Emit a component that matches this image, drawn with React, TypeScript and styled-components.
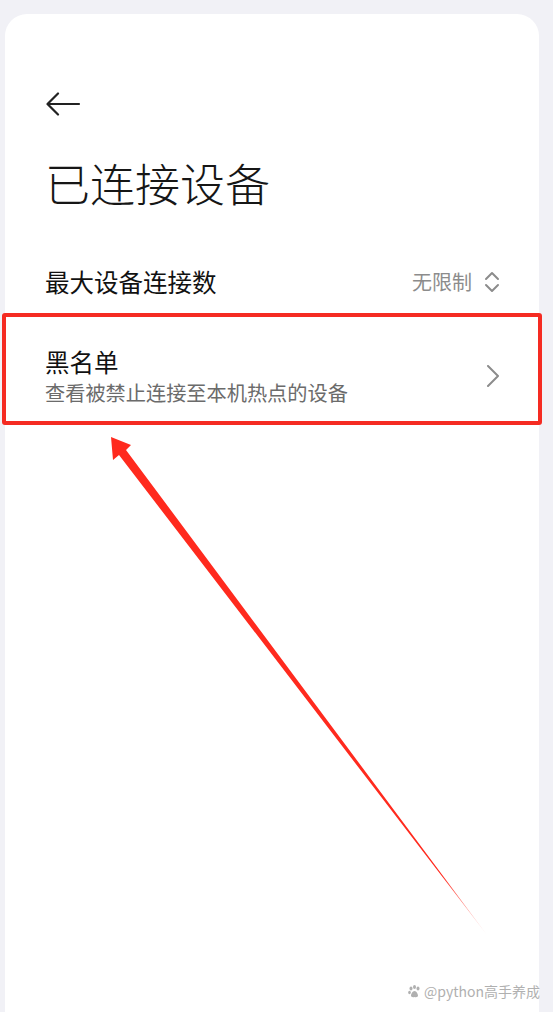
import React from 'react';
import styled, { createGlobalStyle } from 'styled-components';

const GlobalStyle = createGlobalStyle`
  html, body {
    margin: 0;
    padding: 0;
    background: #f1f1f6;
  }
  body {
    font-family: 'Noto Sans CJK SC', 'Noto Sans', sans-serif;
    -webkit-font-smoothing: antialiased;
  }
`;

const Page = styled.div`
  position: relative;
  width: 553px;
  height: 1012px;
  padding-top: 14px;
  box-sizing: border-box;
  overflow: hidden;
`;

const Card = styled.div`
  margin-left: 5px;
  width: 534px;
  height: 998px;
  background: #ffffff;
  border-radius: 22px 22px 0 0;
  padding-top: 78px;
  box-sizing: border-box;
`;

const Header = styled.div`
  display: flex;
  flex-direction: column;
  align-items: flex-start;
  padding-left: 40px;
`;

const BackButton = styled.button`
  display: flex;
  padding: 0;
  border: 0;
  background: none;
  width: 36px;
  height: 24px;
`;

const Title = styled.h1`
  margin: 44px 0 0;
  font-size: 45px;
  line-height: 1;
  font-weight: 300;
  color: #161616;
`;

const List = styled.div`
  display: flex;
  flex-direction: column;
  margin-top: 39px;
`;

const Row = styled.div<{ $highlight?: boolean }>`
  position: relative;
  display: flex;
  align-items: center;
  justify-content: space-between;
  padding: ${(p) => (p.$highlight ? '30px 39px 22px 40px' : '0 39px 0 40px')};
  min-height: ${(p) => (p.$highlight ? '0' : '76px')};

  &::after {
    content: '';
    display: ${(p) => (p.$highlight ? 'block' : 'none')};
    position: absolute;
    top: -7px;
    bottom: 0;
    left: -3px;
    right: -3px;
    border: 4px solid #f52b22;
    border-radius: 3px;
    pointer-events: none;
  }
`;

const RowText = styled.div`
  display: flex;
  flex-direction: column;
`;

const RowTitle = styled.span`
  font-size: 24.5px;
  line-height: 1;
  font-weight: 400;
  color: #111;
`;

const RowSub = styled.span`
  margin-top: 8px;
  font-size: 20.2px;
  line-height: 1;
  color: #6b6b6b;
`;

const RowValue = styled.div`
  display: flex;
  align-items: center;
  gap: 12px;
  font-size: 20px;
  line-height: 1;
  color: #8c8c8c;
`;

const Overlay = styled.svg`
  position: absolute;
  top: 0;
  left: 0;
  pointer-events: none;
`;

const Watermark = styled.div`
  position: absolute;
  top: 984px;
  right: 13px;
  display: flex;
  align-items: center;
  gap: 3px;
  font-size: 14px;
  line-height: 1;
  color: #b0b0b0;
  text-shadow: 0 0 2px #fff;
`;

function BackArrow() {
  return (
    <svg width="36" height="24" viewBox="0 0 36 24" fill="none">
      <path
        d="M34 12H3M13 1.5L2.5 12L13 22.5"
        stroke="#222"
        strokeWidth="2.2"
        strokeLinecap="round"
        strokeLinejoin="round"
      />
    </svg>
  );
}

function UpDown() {
  return (
    <svg width="16" height="22" viewBox="0 0 16 22" fill="none">
      <path
        d="M2 8L8 2L14 8M2 14L8 20L14 14"
        stroke="#8c8c8c"
        strokeWidth="2"
        strokeLinecap="round"
        strokeLinejoin="round"
      />
    </svg>
  );
}

function ChevronRight() {
  return (
    <svg width="14" height="22" viewBox="0 0 14 22" fill="none">
      <path
        d="M2 1L12 11L2 21"
        stroke="#8c8c8c"
        strokeWidth="2"
        strokeLinecap="round"
        strokeLinejoin="round"
      />
    </svg>
  );
}

function Paw() {
  return (
    <svg width="13" height="13" viewBox="0 0 13 13" fill="#b0b0b0">
      <ellipse cx="3" cy="3.5" rx="1.5" ry="2" />
      <ellipse cx="6.5" cy="2" rx="1.5" ry="2" />
      <ellipse cx="10" cy="3.5" rx="1.5" ry="2" />
      <ellipse cx="1.5" cy="7.5" rx="1.3" ry="1.7" />
      <path d="M6.5 6C4.5 6 3 9 3 10.5C3 12 4.5 12.5 6.5 12C8.5 12.5 10 12 10 10.5C10 9 8.5 6 6.5 6Z" />
    </svg>
  );
}

// pointer drawn from the lower right corner up to the blacklist row
function Pointer() {
  return (
    <Overlay width="553" height="1012" viewBox="0 0 553 1012">
      <defs>
        <linearGradient id="tail" x1="111" y1="438" x2="487" y2="935" gradientUnits="userSpaceOnUse">
          <stop offset="0" stopColor="#ff2a1e" />
          <stop offset="0.88" stopColor="#ff2a1e" />
          <stop offset="1" stopColor="#ff2a1e" stopOpacity="0.1" />
        </linearGradient>
      </defs>
      <polygon
        points="111,437 113,460 119,455 487,935 126,450 131,445"
        fill="url(#tail)"
      />
    </Overlay>
  );
}

export default function App() {
  return (
    <>
      <GlobalStyle />
      <Page>
        <Card>
          <Header>
            <BackButton aria-label="返回">
              <BackArrow />
            </BackButton>
            <Title>已连接设备</Title>
          </Header>
          <List>
            <Row>
              <RowTitle>最大设备连接数</RowTitle>
              <RowValue>
                无限制
                <UpDown />
              </RowValue>
            </Row>
            <Row $highlight>
              <RowText>
                <RowTitle>黑名单</RowTitle>
                <RowSub>查看被禁止连接至本机热点的设备</RowSub>
              </RowText>
              <ChevronRight />
            </Row>
          </List>
        </Card>
        <Pointer />
        <Watermark>
          <Paw />
          @python高手养成
        </Watermark>
      </Page>
    </>
  );
}
